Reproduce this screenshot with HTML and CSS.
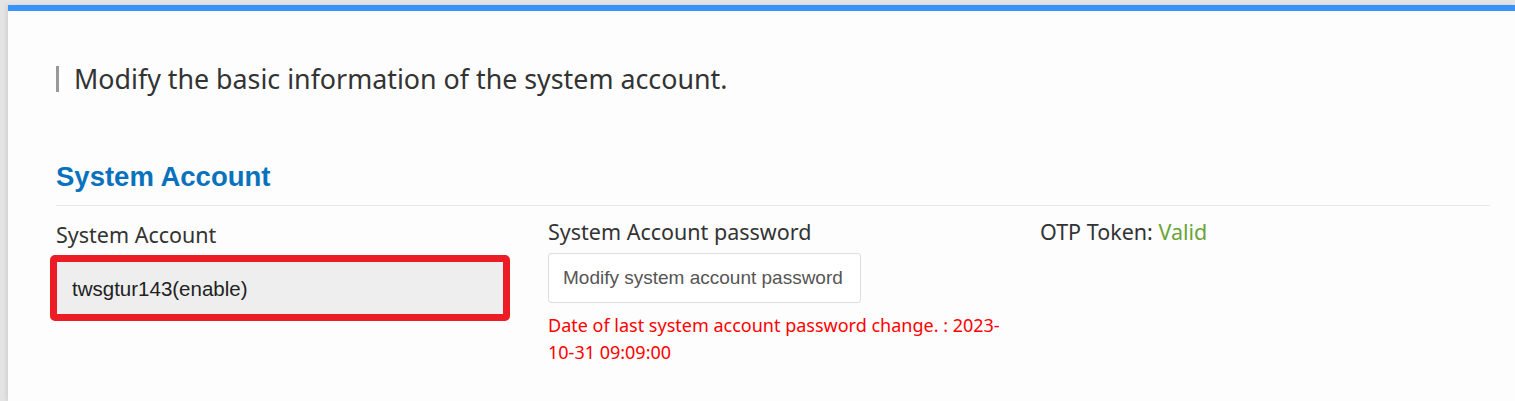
FILE: index.html
```html
<!DOCTYPE html>
<html lang="en">
<head>
<meta charset="utf-8">
<title>System Account</title>
<link rel="stylesheet" href="styles.css">
</head>
<body>
<div class="panel">
  <h1 class="page-title">Modify the basic information of the system account.</h1>
  <h2 class="section-title">System Account</h2>
  <div class="fields">
    <div class="field">
      <div class="label label-first">System Account</div>
      <div class="highlight">
        <div class="readonly">twsgtur143(enable)</div>
      </div>
    </div>
    <div class="field">
      <div class="label">System Account password</div>
      <button class="btn" type="button">Modify system account password</button>
      <div class="note">Date of last system account password change. : 2023-10-31 09:09:00</div>
    </div>
    <div class="field">
      <div class="label">OTP Token: <span class="valid">Valid</span></div>
    </div>
  </div>
</div>
</body>
</html>
```
FILE: styles.css
```css
html, body {
  margin: 0;
  padding: 0;
  background: #e4e4e4;
  height: 100%;
}
body {
  padding: 5px 0 0 8px;
  box-sizing: border-box;
  overflow: hidden;
  font-family: "Noto Sans", "Open Sans", sans-serif;
  color: #333;
}
.panel {
  background: #fdfdfd;
  border-top: 6px solid #3893f7;
  box-shadow: -2px 0 4px rgba(0,0,0,0.08);
  height: 100%;
  padding: 55px 25px 0 48px;
  box-sizing: border-box;
}
.page-title {
  margin: 0;
  font-weight: 400;
  font-size: 26.8px;
  line-height: 26px;
  color: #333;
  border-left: 3px solid #999;
  padding-left: 15px;
}
.section-title {
  margin: 69px 0 0 0;
  font-family: "Liberation Sans", Arial, sans-serif;
  font-weight: 700;
  font-size: 27.5px;
  line-height: 32px;
  color: #0a72bd;
  padding-bottom: 12px;
  border-bottom: 1px solid #e8e8e8;
}
.fields {
  display: grid;
  grid-template-columns: 462px 462px 1fr;
  column-gap: 30px;
  padding-top: 12px;
}
.label {
  font-size: 21.5px;
  line-height: 28px;
  color: #333;
  margin-bottom: 6px;
}
.label-first {
  margin-top: 3px;
}
.valid {
  color: #6aa33a;
}
.highlight {
  margin-left: -6px;
  width: 460px;
  border: 7px solid #ec1c24;
  border-radius: 5px;
  box-sizing: border-box;
}
.readonly {
  background: #eeeeee;
  font-family: "Liberation Sans", Arial, sans-serif;
  font-size: 20.5px;
  color: #222;
  height: 52px;
  line-height: 54px;
  padding-left: 15px;
}
.btn {
  display: block;
  background: #fff;
  border: 1px solid #ddd;
  border-radius: 3px;
  font-family: "Liberation Sans", Arial, sans-serif;
  font-size: 19px;
  color: #555;
  height: 50px;
  width: 313px;
  padding: 0 14px;
  text-align: left;
  margin-top: 7px;
}
.note {
  margin-top: 9px;
  font-size: 18px;
  line-height: 27px;
  color: #f00;
}
```
